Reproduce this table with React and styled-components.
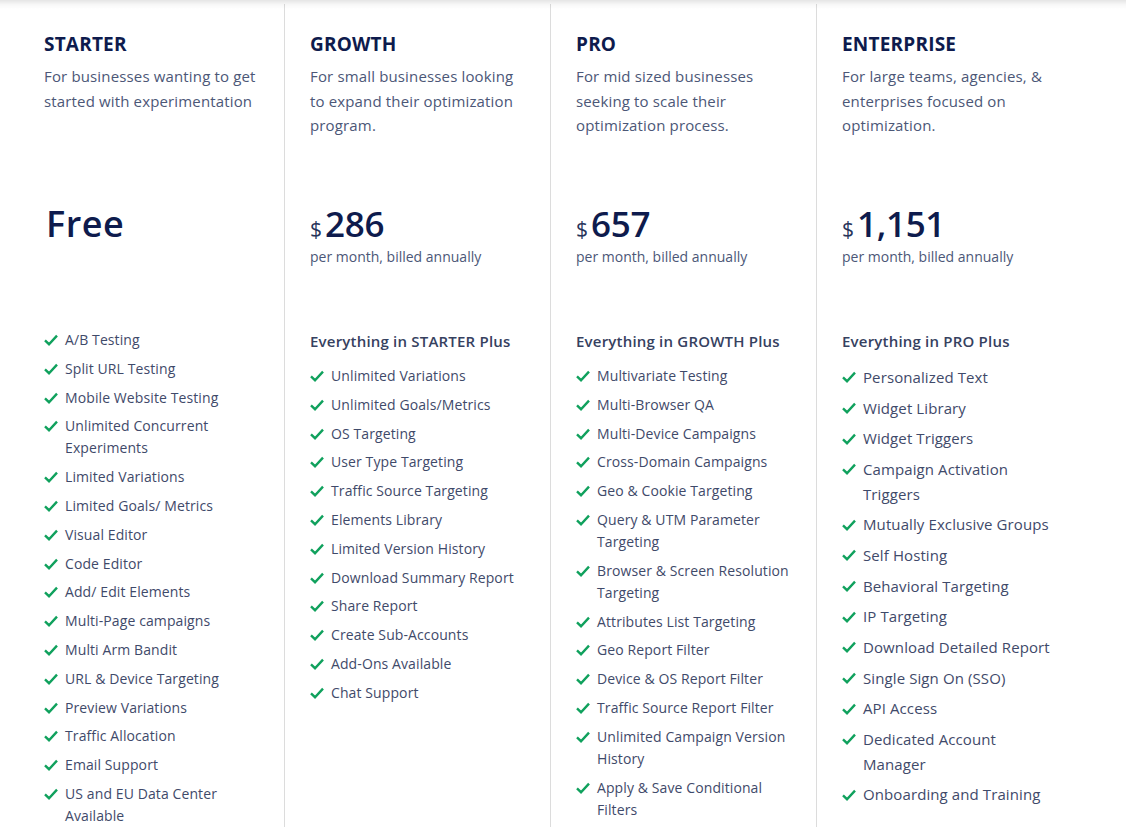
import React from 'react'
import styled, { createGlobalStyle } from 'styled-components'

const GlobalStyle = createGlobalStyle`
    html, body {
        margin: 0;
        padding: 0;
        background: #ffffff;
    }
    body {
        font-family: "Open Sans", "Noto Sans", "Liberation Sans", sans-serif;
        -webkit-font-smoothing: antialiased;
    }
`

const Page = styled.div`
    position: relative;
    width: 1126px;
    height: 827px;
    overflow: hidden;
    background: #fff;
`

// shadow cast by the header above the table
const TopShade = styled.div`
    position: absolute;
    top: 0;
    left: 0;
    right: 0;
    height: 9px;
    background: linear-gradient(to bottom, rgba(0, 0, 0, 0.1), rgba(0, 0, 0, 0.03) 50%, rgba(0, 0, 0, 0));
    pointer-events: none;
`

const Plans = styled.div`
    display: grid;
    grid-template-columns: repeat(4, 266px);
    margin-left: 18px;
    padding-top: 4px;
    height: 823px;
`

const Column = styled.div`
    padding: 26px 26px 0 ${p => p.first ? '26px' : '25px'};
    border-left: ${p => p.first ? 'none' : '1px solid #dcdcdc'};
`

const HeaderBlock = styled.div`
    height: 172px;
`

const Title = styled.h2`
    margin: 0 0 6px;
    font-size: 19px;
    line-height: 28px;
    font-weight: 700;
    color: #0e1b4d;
    letter-spacing: 0.2px;
`

const Description = styled.p`
    margin: 0;
    font-size: 15px;
    line-height: 24.5px;
    color: #4c5777;
    letter-spacing: 0.15px;
`

const PriceBlock = styled.div`
    height: 127px;
`

const PriceRow = styled.div`
    display: flex;
    align-items: baseline;
    gap: 3px;
    height: 44px;
    color: #0e1b4d;
`

const Currency = styled.span`
    font-size: 21px;
    color: #27345a;
`

const Amount = styled.span`
    font-size: ${p => p.free ? '36px' : '35px'};
    line-height: 44px;
    font-weight: 600;
    letter-spacing: ${p => p.free ? '0.5px' : '-0.3px'};
    margin-left: ${p => p.free ? '2px' : '0'};
`

const Billing = styled.div`
    font-size: 14px;
    line-height: 22px;
    color: #4c5777;
`

const FeatureHeading = styled.div`
    font-size: 15px;
    line-height: 24px;
    font-weight: 600;
    color: #36415f;
    letter-spacing: 0.2px;
    margin-bottom: 12px;
`

const FeatureList = styled.ul`
    list-style: none;
    margin: 0;
    padding: 0;
    display: flex;
    flex-direction: column;
    gap: ${p => p.large ? '6.2px' : '6.8px'};
`

const Feature = styled.li`
    display: flex;
    align-items: flex-start;
    gap: 7px;
    font-size: ${p => p.large ? '15px' : '14px'};
    line-height: ${p => p.large ? '24.5px' : '22px'};
    letter-spacing: ${p => p.large ? '0.1px' : '0.1px'};
    color: #3f4a6a;
`

const CheckWrap = styled.span`
    flex: 0 0 14px;
    display: flex;
    align-items: center;
    height: ${p => p.large ? '24.5px' : '22px'};
`

const Check = () => (
    <svg width="14" height="12" viewBox="0 0 14 12">
        <path d="M1 6.4 L5 10.2 L13 1.6" fill="none" stroke="#10a15d" strokeWidth="2.4" strokeLinecap="butt" strokeLinejoin="miter" />
    </svg>
)

const plans = [
    {
        name: 'STARTER',
        desc: 'For businesses wanting to get started with experimentation',
        free: true,
        features: [
            'A/B Testing', 'Split URL Testing', 'Mobile Website Testing', 'Unlimited Concurrent Experiments',
            'Limited Variations', 'Limited Goals/ Metrics', 'Visual Editor', 'Code Editor', 'Add/ Edit Elements',
            'Multi-Page campaigns', 'Multi Arm Bandit', 'URL & Device Targeting', 'Preview Variations',
            'Traffic Allocation', 'Email Support', 'US and EU Data Center Available',
        ],
    },
    {
        name: 'GROWTH',
        desc: 'For small businesses looking to expand their optimization program.',
        price: '286',
        heading: 'Everything in STARTER Plus',
        features: [
            'Unlimited Variations', 'Unlimited Goals/Metrics', 'OS Targeting', 'User Type Targeting',
            'Traffic Source Targeting', 'Elements Library', 'Limited Version History', 'Download Summary Report',
            'Share Report', 'Create Sub-Accounts', 'Add-Ons Available', 'Chat Support',
        ],
    },
    {
        name: 'PRO',
        desc: 'For mid sized businesses seeking to scale their optimization process.',
        price: '657',
        heading: 'Everything in GROWTH Plus',
        features: [
            'Multivariate Testing', 'Multi-Browser QA', 'Multi-Device Campaigns', 'Cross-Domain Campaigns',
            'Geo & Cookie Targeting', 'Query & UTM Parameter Targeting', 'Browser & Screen Resolution Targeting',
            'Attributes List Targeting', 'Geo Report Filter', 'Device & OS Report Filter',
            'Traffic Source Report Filter', 'Unlimited Campaign Version History', 'Apply & Save Conditional Filters',
        ],
    },
    {
        name: 'ENTERPRISE',
        desc: 'For large teams, agencies, & enterprises focused on optimization.',
        price: '1,151',
        heading: 'Everything in PRO Plus',
        large: true,
        features: [
            'Personalized Text', 'Widget Library', 'Widget Triggers', 'Campaign Activation Triggers',
            'Mutually Exclusive Groups', 'Self Hosting', 'Behavioral Targeting', 'IP Targeting',
            'Download Detailed Report', 'Single Sign On (SSO)', 'API Access', 'Dedicated Account Manager',
            'Onboarding and Training',
        ],
    },
]

/* Pricing table ================================== */
const App = () => {
    return (
        <Page>
            <GlobalStyle />
            <Plans>
                {plans.map((plan, i) => (
                    <Column key={plan.name} first={i === 0}>
                        <HeaderBlock>
                            <Title>{plan.name}</Title>
                            <Description>{plan.desc}</Description>
                        </HeaderBlock>
                        <PriceBlock>
                            <PriceRow>
                                {plan.free ? (
                                    <Amount free>Free</Amount>
                                ) : (
                                    <>
                                        <Currency>$</Currency>
                                        <Amount>{plan.price}</Amount>
                                    </>
                                )}
                            </PriceRow>
                            {!plan.free && <Billing>per month, billed annually</Billing>}
                        </PriceBlock>
                        {plan.heading && <FeatureHeading>{plan.heading}</FeatureHeading>}
                        <FeatureList large={plan.large}>
                            {plan.features.map(f => (
                                <Feature key={f} large={plan.large}>
                                    <CheckWrap large={plan.large}><Check /></CheckWrap>
                                    <span>{f}</span>
                                </Feature>
                            ))}
                        </FeatureList>
                    </Column>
                ))}
            </Plans>
            <TopShade />
        </Page>
    )
}

export default App
